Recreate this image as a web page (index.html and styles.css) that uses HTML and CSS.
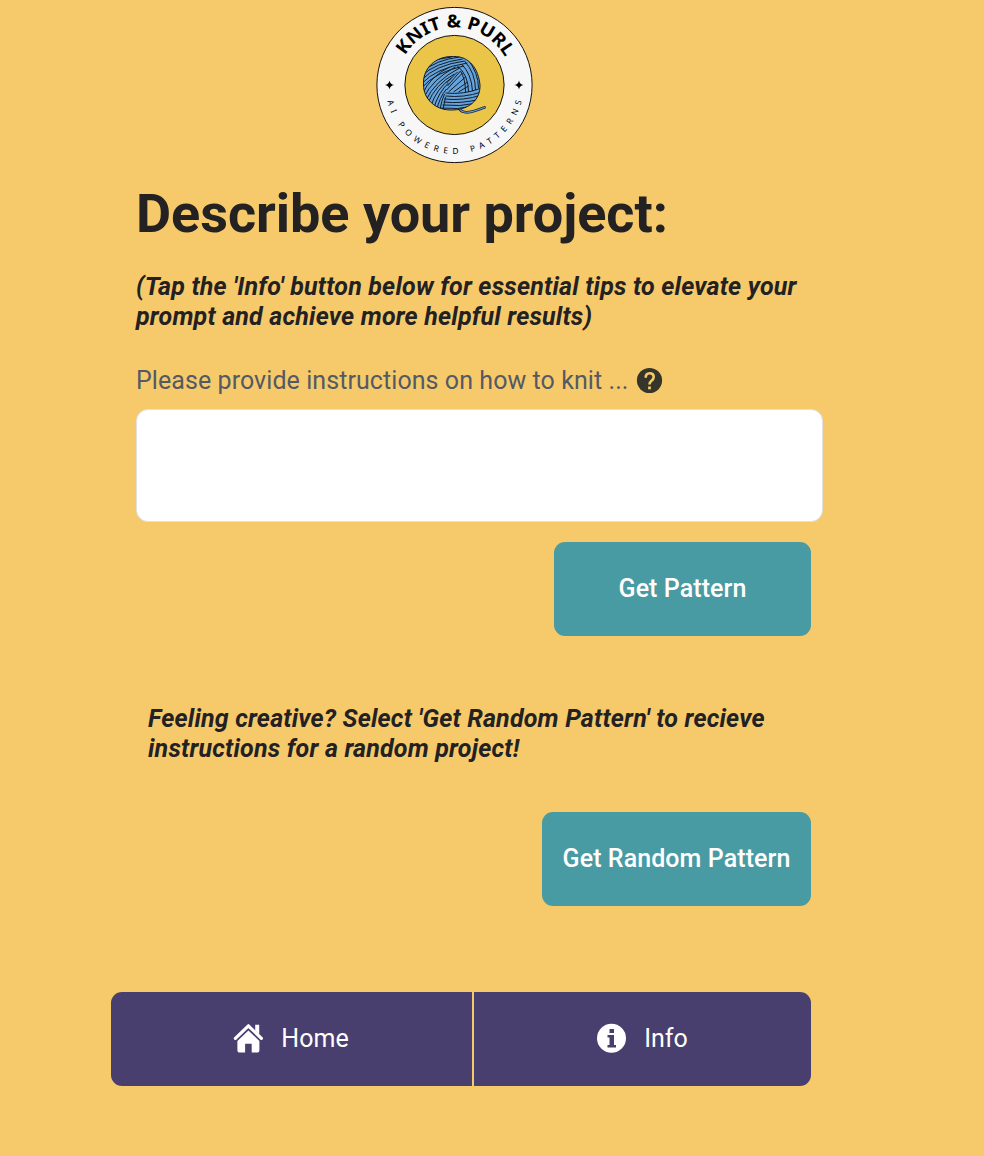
FILE: index.html
```html
<!DOCTYPE html>
<html lang="en">
<head>
<meta charset="utf-8">
<title>Knit &amp; Purl</title>
<link rel="stylesheet" href="styles.css">
</head>
<body>
<main class="page">
  <svg class="logo" viewBox="-0.500 0 158 158" role="img" aria-label="Knit &amp; Purl">
    <defs>
      <path id="arc-top" d="M21.500 79a57.500 57.500 0 0 1 115 0"/>
      <path id="arc-bottom" d="M10 79a69 69 0 0 0 138 0"/>
      <clipPath id="ball"><path d="M48 79C47 62 60 50 78 50.500C94 50 103 63 104.500 79C105 95 92 104.500 75 104C60 104 48 93 48 79Z"/></clipPath>
    </defs>
    <circle class="ring" cx="79" cy="79" r="77.600"/>
    <circle class="disc" cx="79" cy="79" r="49.600"/>
    <text class="logo-name"><textPath href="#arc-top" startOffset="50.500%" textLength="121" lengthAdjust="spacingAndGlyphs">KNIT &amp; PURL</textPath></text>
    <text class="logo-tag"><textPath href="#arc-bottom" startOffset="50%" textLength="184">AI POWERED PATTERNS</textPath></text>
    <path d="M14 74.500Q14.600 78.400 18.500 79Q14.600 79.600 14 83.500Q13.400 79.600 9.500 79Q13.400 78.400 14 74.500ZM143.500 74.500Q144.100 78.400 148 79Q144.100 79.600 143.500 83.500Q142.900 79.600 139 79Q142.900 78.400 143.500 74.500Z"/>
    <path class="tail-edge" d="M84 103C89 110 101 104 109 101.500"/>
    <path class="tail" d="M84 103C89 110 101 104 109 101.500"/>
    <g clip-path="url(#ball)">
      <path class="wool" d="M46 48h61v59H46z"/>
      <g class="strand">
        <path d="M47 66Q60 54 84 51M46 70Q59 57 87 53M46 74Q60 59 89 55M46 78Q60 62 92 57M46 82Q60 66 88 60M50 58Q62 52 76 51"/>
        <path d="M47 88Q54 71 74 61M48 92Q57 73 80 61M50 95Q59 75 84 62M52 98Q60 78 79 68M55 101Q61 82 76 72M58 103Q63 86 73 77M61 105Q64 91 71 83M64 106Q66 94 69 88M67 106L70 91"/>
        <path d="M72 80Q78 73 85 65M71 84Q78 76 87 67M73 86L90 71M78 86L92 76M83 86L93 80M71 77L82 66"/>
        <path d="M82 60Q93 69 93 86M86 58Q96 68 97 85M89 55Q100 67 100 84M92 53Q103 67 103 82M85 65Q90 73 90 86"/>
        <path d="M70 87Q88 89 106 82M70 90Q88 92 106 86M69 93Q88 95 106 89M68 96Q86 98 105 93M67 99Q84 101 102 97M66 102Q82 104 98 100"/>
      </g>
    </g>
    <path class="outline" d="M48 79C47 62 60 50 78 50.500C94 50 103 63 104.500 79C105 95 92 104.500 75 104C60 104 48 93 48 79Z"/>
  </svg>

  <section class="prompt">
    <h1 class="title">Describe your project:</h1>
    <p class="note">(Tap the 'Info' button below for essential tips to elevate your prompt and achieve more helpful results)</p>
    <label class="label" for="request"><span>Please provide instructions on how to knit ...</span>
      <svg class="help" viewBox="0 0 26 26"><circle cx="12.500" cy="12.500" r="12.600"/><path d="M8.700 9.700Q8.700 5.200 12.600 5.200Q16.700 5.200 16.700 9Q16.700 11 14.500 12.700Q12.500 14.200 12.500 16.600"/><path class="help-dot" d="M11.100 18.500h2.800v2.800h-2.800z"/></svg>
    </label>
    <textarea class="request" id="request"></textarea>
  </section>

  <button class="button">Get Pattern</button>
  <p class="note random-note">Feeling creative? Select 'Get Random Pattern' to recieve instructions for a random project!</p>
  <button class="button button-random">Get Random Pattern</button>

  <nav class="nav">
    <a class="nav-item home">
      <svg class="icon" viewBox="-0.700 -0.500 30 30"><path class="roof" d="M1.700 14.800L14.700 2.300L27.700 14.800"/><path d="M21.500 1.300h4v9.700l-4-4zM14.700 7L25.700 17.400V27Q25.700 28.900 23.900 28.900H18V20.300H11.400V28.900H5.500Q3.700 28.900 3.700 27V17.400Z"/></svg>
      <span>Home</span>
    </a>
    <a class="nav-item info">
      <svg class="icon" viewBox="-0.500 -0.500 30 30"><circle cx="15" cy="14.800" r="14.500"/><path class="info-mark" d="M13 5.500h4.500v4H13zM11 11.500h6.500v10h2V24H11v-2.500h2v-7.500h-2z"/></svg>
      <span>Info</span>
    </a>
  </nav>
</main>
</body>
</html>
```

FILE: styles.css
```css
* { box-sizing: border-box; }

body {
  margin: 0;
  background: #f6ca6b;
  color: #232122;
  font-family: Roboto, "Liberation Sans", sans-serif;
}

.page {
  display: flex;
  flex-direction: column;
  width: 700px;
  min-height: 1156px;
  margin-left: 111px;
  padding-top: 6px;
}

.logo {
  width: 158px;
  height: 158px;
  margin-left: 264px;
}

.ring { fill: #f7f7f7; stroke: #111; stroke-width: 1; }
.disc { fill: #ebc548; stroke: #111; stroke-width: 1; }
.logo-name { font: 700 18px "Noto Sans", sans-serif; text-anchor: middle; }
.logo-tag { font: 400 8.300px "Noto Sans", sans-serif; text-anchor: middle; }
.wool { fill: #67a3db; }
.strand, .outline { fill: none; stroke: #101c28; stroke-width: 1; }
.tail-edge, .tail { fill: none; stroke: #17283a; stroke-width: 2.800; stroke-linecap: round; }
.tail { stroke: #67a3db; stroke-width: 1.100; }

.prompt {
  display: flex;
  flex-direction: column;
  width: 687px;
  margin-left: 25px;
}

.title {
  margin: 18px 0 0;
  font-size: 54px;
  line-height: 64px;
  font-weight: 700;
  letter-spacing: -.03px;
}

.note {
  margin: 26px 0 0;
  font-size: 25px;
  line-height: 30px;
  font-style: italic;
  font-weight: 700;
  letter-spacing: .19px;
}

.label {
  display: flex;
  align-items: center;
  gap: 8px;
  height: 30px;
  margin-top: 33px;
  color: #545963;
  font-size: 25px;
  letter-spacing: .07px;
}

.help { width: 26px; height: 26px; margin-top: 1px; overflow: visible; fill: #35352c; }
.help path { fill: none; stroke: #f6ca6b; stroke-width: 2.600; }
.help .help-dot { fill: #f6ca6b; stroke: none; }

.request {
  height: 113px;
  margin: 14px 0 0;
  border: 1px solid #e2e0df;
  border-radius: 12px;
  background: #fff;
  resize: none;
}

.button {
  align-self: flex-end;
  width: 257px;
  height: 94px;
  margin-top: 20px;
  padding: 0 0 2px;
  border: 0;
  border-radius: 11px;
  background: #489ba3;
  color: #fff;
  font: 500 25px Roboto, sans-serif;
  letter-spacing: .08px;
}

.random-note { width: 660px; margin: 68px 0 0 37px; }
.button-random { width: 269px; margin-top: 48px; }

.nav {
  display: grid;
  grid-template-columns: 361px 337px;
  gap: 2px;
  height: 94px;
  margin-top: 86px;
}

.nav-item {
  display: flex;
  align-items: center;
  justify-content: center;
  gap: 18px;
  padding: 0 1px 2px 0;
  background: #493f6e;
  color: #fff;
  font-size: 25px;
}

.home { border-radius: 11px 0 0 11px; }
.info { border-radius: 0 11px 11px 0; }
.icon { width: 30px; height: 30px; overflow: visible; fill: #fff; }
.roof { fill: none; stroke: #fff; stroke-width: 3.200; stroke-linecap: round; stroke-linejoin: round; }
.info-mark { fill: #493f6e; }
```
